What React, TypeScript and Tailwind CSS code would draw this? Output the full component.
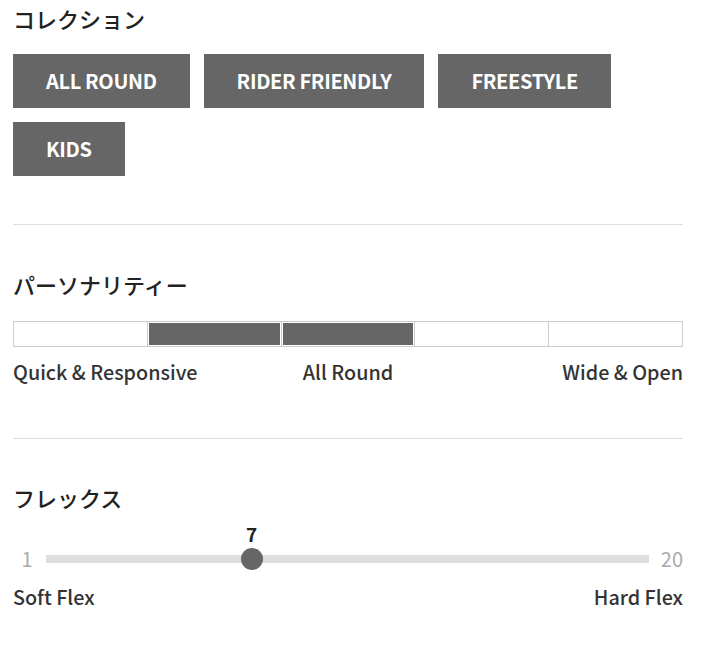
const font = { fontFamily: '"Noto Sans CJK JP", "Noto Sans", sans-serif' }

const collections = ["ALL ROUND", "RIDER FRIENDLY", "FREESTYLE", "KIDS"]
const personality = [false, true, true, false, false]

function Heading({ children }: { children: React.ReactNode }) {
  return <h2 className="text-[22px] leading-[30px] text-[#222] font-medium">{children}</h2>
}

export default function App() {
  const min = 1
  const max = 20
  const value = 7
  const pct = ((value - min) / (max - min)) * 100 * 1.08

  return (
    <div className="bg-white w-[710px] h-[652px] px-[13px] pt-[3px] text-[#333]" style={font}>
      {/* Collection */}
      <section className="w-[670px]">
        <Heading>コレクション</Heading>
        <div className="flex flex-wrap gap-[14px] mt-[21px] w-[640px]">
          {collections.map((c) => (
            <button
              key={c}
              className="h-[54px] px-[33px] bg-[#666] text-white text-[20px] font-bold tracking-[-0.35px]"
            >
              {c}
            </button>
          ))}
        </div>
      </section>

      <div className="w-[670px] h-px bg-[#ddd] mt-[48px]" />

      {/* Personality */}
      <section className="w-[670px] mt-[44px]">
        <Heading>パーソナリティー</Heading>
        <div className="flex mt-[22px] h-[26px] border border-[#ccc]">
          {personality.map((on, i) => (
            <div key={i} className={`flex-1 p-px ${i > 0 ? "border-l border-[#ccc]" : ""}`}>
              {on && <div className="w-full h-full bg-[#666]" />}
            </div>
          ))}
        </div>
        <div className="flex justify-between mt-[11px] text-[19.75px] font-medium leading-[28px] text-[#333]">
          <span className="w-[220px]">Quick &amp; Responsive</span>
          <span>All Round</span>
          <span className="w-[220px] text-right">Wide &amp; Open</span>
        </div>
      </section>

      <div className="w-[670px] h-px bg-[#ddd] mt-[52px]" />

      {/* Flex */}
      <section className="w-[670px] mt-[43px]">
        <Heading>フレックス</Heading>
        <div className="flex mt-[10px] h-[24px]">
          <span className="w-[33px]" />
          <div className="relative flex-1">
            <span
              className="absolute -translate-x-1/2 text-[19px] leading-[24px] font-bold text-[#222]"
              style={{ left: `${pct}%` }}
            >
              {value}
            </span>
          </div>
          <span className="w-[34px]" />
        </div>
        <div className="flex items-center mt-[1px] h-[24px]">
          <span className="w-[28px] mr-[5px] text-[20px] text-[#aaa] text-center">{min}</span>
          <div className="relative flex-1 h-[8px] bg-[#ddd]">
            <div
              className="absolute top-1/2 -translate-x-1/2 -translate-y-1/2 w-[22px] h-[22px] rounded-full bg-[#666]"
              style={{ left: `${pct}%` }}
            />
          </div>
          <span className="w-[23px] ml-[11px] text-[20px] text-[#aaa] text-right">{max}</span>
        </div>
        <div className="flex justify-between mt-[12px] text-[19.75px] font-medium leading-[28px]">
          <span>Soft Flex</span>
          <span>Hard Flex</span>
        </div>
      </section>
    </div>
  )
}
